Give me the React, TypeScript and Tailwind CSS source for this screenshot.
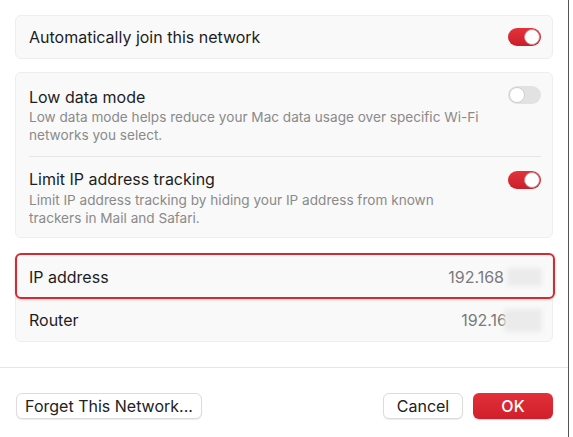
import React from "react";

function Toggle({ on }: { on: boolean }) {
  if (on) {
    return (
      <div className="relative h-[18px] w-[33px] shrink-0 rounded-full bg-gradient-to-b from-[#e4323c] to-[#c91f2a]">
        <div className="absolute right-[1px] top-[1px] h-[16px] w-[16px] rounded-full border border-[#c98a8f] bg-white" />
      </div>
    );
  }
  return (
    <div className="relative h-[18px] w-[33px] shrink-0 rounded-full bg-[#e2e2e2]">
      <div className="absolute left-[1px] top-[1px] h-[16px] w-[16px] rounded-full border border-[#cfcfcf] bg-white" />
    </div>
  );
}

function Blur({ className }: { className: string }) {
  return <div className={"rounded-[2px] bg-[#ebebeb] blur-[2px] " + className} />;
}

export default function App() {
  return (
    <div
      className="flex h-[437px] w-[573px] bg-white text-[#1d1d1f]"
      style={{ fontFamily: "Inter, 'Noto Sans', sans-serif" }}
    >
      <div className="flex w-[568px] flex-col">
        <div className="flex flex-col px-[15px] pt-[15px]">
          {/* Card 1 */}
          <div className="flex h-[44px] items-center justify-between rounded-[6px] border border-[#eeeeee] bg-[#f9f9f9] pl-[13px] pr-[11px]">
            <span className="text-[16px] leading-[18px]">Automatically join this network</span>
            <Toggle on />
          </div>

          {/* Card 2 */}
          <div className="mt-[13px] flex flex-col rounded-[6px] border border-[#eeeeee] bg-[#f9f9f9] pl-[13px] pr-[11px]">
            <div className="flex items-start justify-between border-b border-[#e6e6e6] pb-[12px] pt-[15px]">
              <div className="flex flex-col">
                <span className="text-[16px] leading-[18px]">Low data mode</span>
                <span className="mt-[2px] w-[470px] text-[13.6px] leading-[18px] text-[#8a8a8a]">
                  Low data mode helps reduce your Mac data usage over specific Wi-Fi networks you select.
                </span>
              </div>
              <div className="mt-[-2px]">
                <Toggle on={false} />
              </div>
            </div>
            <div className="flex items-start justify-between pb-[10px] pt-[13px]">
              <div className="flex flex-col">
                <span className="text-[16px] leading-[18px]">Limit IP address tracking</span>
                <span className="mt-[3px] w-[440px] text-[13.6px] leading-[18px] text-[#8a8a8a]">
                  Limit IP address tracking by hiding your IP address from known trackers in Mail and Safari.
                </span>
              </div>
              <div className="mt-[1px]">
                <Toggle on />
              </div>
            </div>
          </div>

          {/* Card 3 */}
          <div className="mt-[16px] flex flex-col rounded-[6px] border border-[#eeeeee] bg-[#f9f9f9]">
            <div className="relative flex h-[44px] items-center justify-between pl-[13px] pr-[10px]">
              <div className="pointer-events-none absolute bottom-0 left-[-1px] right-[-3px] top-[-2px] rounded-[6px] border-2 border-[#d42a30] shadow-[0_1px_3px_rgba(0,0,0,0.15)]" />
              <span className="text-[16px] leading-[18px]">IP address</span>
              <div className="flex items-center">
                <span className="text-[16px] leading-[18px] text-[#7b7b7b]">192.168</span>
                <Blur className="ml-[3px] h-[18px] w-[35px]" />
              </div>
            </div>
            <div className="flex h-[42px] items-center justify-between pl-[13px] pr-[10px]">
              <span className="text-[16px] leading-[18px]">Router</span>
              <div className="flex items-center">
                <span className="text-[16px] leading-[18px] text-[#7b7b7b]">192.16</span>
                <Blur className="ml-[-3px] h-[23px] w-[38px]" />
              </div>
            </div>
          </div>
        </div>

        <div className="mt-[25px] h-px w-full bg-[#e6e6e6]" />

        <div className="flex items-center justify-between pl-[16px] pr-[15px] pt-[25px]">
          <button className="h-[26px] w-[186px] rounded-[6px] border border-[#dcdcdc] bg-white text-[16px] leading-[18px] text-[#222] shadow-[0_1px_1px_rgba(0,0,0,0.08)]">
            Forget This Network...
          </button>
          <div className="flex gap-[10px]">
            <button className="h-[26px] w-[80px] rounded-[6px] border border-[#dcdcdc] bg-white text-[16px] leading-[18px] text-[#222] shadow-[0_1px_1px_rgba(0,0,0,0.08)]">
              Cancel
            </button>
            <button className="h-[26px] w-[80px] rounded-[6px] bg-gradient-to-b from-[#e3303a] to-[#cf1f2a] text-[16px] font-medium leading-[18px] text-white shadow-[0_1px_1px_rgba(0,0,0,0.15)]">
              OK
            </button>
          </div>
        </div>
      </div>
      <div className="h-full w-px bg-[#555555]" />
      <div className="h-full w-[4px] bg-white" />
    </div>
  );
}
